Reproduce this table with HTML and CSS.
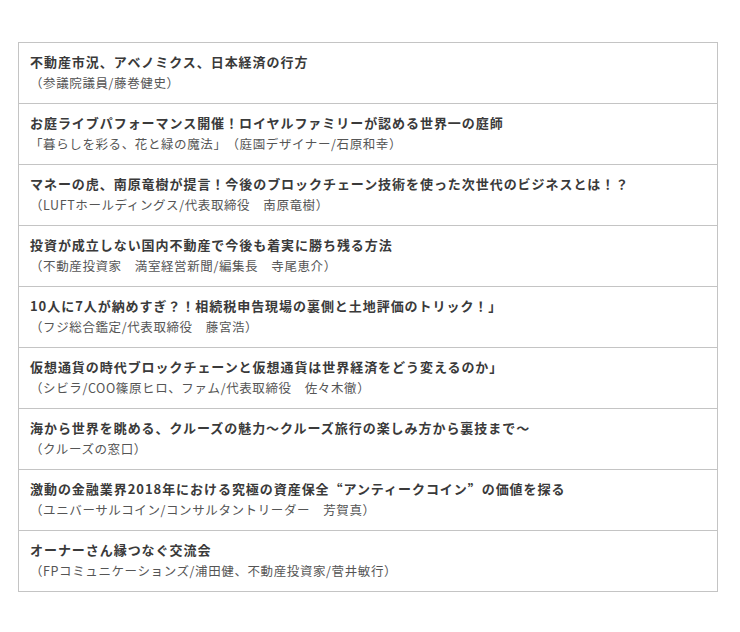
FILE: index.html
```html
<!DOCTYPE html>
<html lang="ja">
<head>
<meta charset="utf-8">
<link rel="stylesheet" href="styles.css">
</head>
<body>
<ul class="list">
  <li class="item"><p class="title">不動産市況、アベノミクス、日本経済の行方</p><p class="sub">（参議院議員/藤巻健史）</p></li>
  <li class="item"><p class="title">お庭ライブパフォーマンス開催！ロイヤルファミリーが認める世界一の庭師</p><p class="sub">「暮らしを彩る、花と緑の魔法」（庭園デザイナー/石原和幸）</p></li>
  <li class="item"><p class="title">マネーの虎、南原竜樹が提言！今後のブロックチェーン技術を使った次世代のビジネスとは！？</p><p class="sub">（LUFTホールディングス/代表取締役　南原竜樹）</p></li>
  <li class="item"><p class="title">投資が成立しない国内不動産で今後も着実に勝ち残る方法</p><p class="sub">（不動産投資家　満室経営新聞/編集長　寺尾恵介）</p></li>
  <li class="item"><p class="title">10人に7人が納めすぎ？！相続税申告現場の裏側と土地評価のトリック！」</p><p class="sub">（フジ総合鑑定/代表取締役　藤宮浩）</p></li>
  <li class="item"><p class="title">仮想通貨の時代ブロックチェーンと仮想通貨は世界経済をどう変えるのか」</p><p class="sub">（シビラ/COO篠原ヒロ、ファム/代表取締役　佐々木徹）</p></li>
  <li class="item"><p class="title">海から世界を眺める、クルーズの魅力～クルーズ旅行の楽しみ方から裏技まで～</p><p class="sub">（クルーズの窓口）</p></li>
  <li class="item"><p class="title">激動の金融業界2018年における究極の資産保全<span class="q">“</span>アンティークコイン<span class="q">”</span>の価値を探る</p><p class="sub">（ユニバーサルコイン/コンサルタントリーダー　芳賀真）</p></li>
  <li class="item"><p class="title">オーナーさん縁つなぐ交流会</p><p class="sub">（FPコミュニケーションズ/浦田健、不動産投資家/菅井敏行）</p></li>
</ul>
</body>
</html>
```
FILE: styles.css
```css
html, body {
  margin: 0;
  padding: 0;
  background: #fff;
}
body {
  padding: 42px 0 0 18px;
  font-family: "Noto Sans CJK JP", "Noto Sans", sans-serif;
}
.list {
  list-style: none;
  margin: 0;
  padding: 0;
  width: 700px;
  box-sizing: border-box;
  border: 1px solid #c4c4c4;
  border-bottom: none;
}
.item {
  padding: 8px 11px 10px;
  border-bottom: 1px solid #c4c4c4;
}
.title, .sub {
  margin: 0;
  line-height: 21px;
  white-space: nowrap;
  text-spacing-trim: space-all;
}
.title {
  font-size: 13px;
  letter-spacing: 0.95px;
  font-weight: 700;
  color: #3a3a3a;
}
.sub {
  font-size: 12.5px;
  letter-spacing: 0.6px;
  color: #555;
}
.q {
  font-feature-settings: "fwid" 1;
}
```
